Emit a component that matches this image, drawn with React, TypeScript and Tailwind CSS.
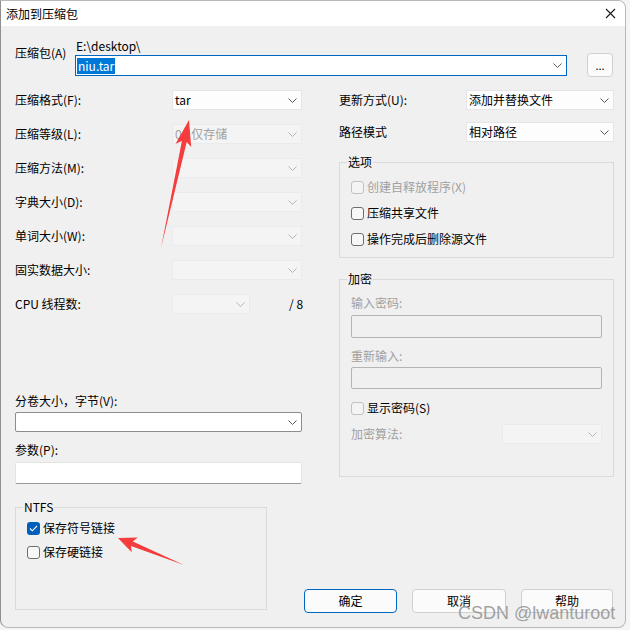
import React from "react";

function Chevron({ light }: { light?: boolean }) {
  return (
    <svg width="9" height="5" viewBox="0 0 9 5" className="shrink-0">
      <path d="M0.5 0.5 L4.5 4.5 L8.5 0.5" fill="none" stroke={light ? "#b5b5b5" : "#5a5a5a"} strokeWidth="1" />
    </svg>
  );
}

function Dropdown({ value, disabled, className }: { value?: string; disabled?: boolean; className: string }) {
  return (
    <div
      className={
        disabled
          ? `h-[20px] shrink-0 flex items-center justify-between pl-[2px] pr-[4px] bg-[#f4f4f4] border border-[#ebebeb] text-[#a0a0a0] ${className}`
          : `h-[20px] shrink-0 flex items-center justify-between pl-[2px] pr-[4px] bg-[#fdfdfd] border border-[#e6e6e6] text-black ${className}`
      }
    >
      <span className="leading-[16px] whitespace-nowrap">{value ?? ""}</span>
      <Chevron light={disabled} />
    </div>
  );
}

function CheckBox({ checked, disabled, label, labelGray }: { checked?: boolean; disabled?: boolean; label: string; labelGray?: boolean }) {
  return (
    <div className="h-[16px] flex items-center gap-[3px]">
      {checked ? (
        <div className="w-[13px] h-[13px] rounded-[3px] bg-[#005fb8] flex items-center justify-center">
          <svg width="9" height="7" viewBox="0 0 9 7">
            <path d="M1 3.5 L3.3 5.8 L8 1" fill="none" stroke="#ffffff" strokeWidth="1.1" />
          </svg>
        </div>
      ) : (
        <div
          className={
            disabled
              ? "w-[13px] h-[13px] rounded-[3px] border border-[#c2c2c2] bg-[#f4f4f4]"
              : "w-[13px] h-[13px] rounded-[3px] border border-[#6e6e6e] bg-[#f7f7f7]"
          }
        />
      )}
      <span className={labelGray ? "leading-[16px] text-[#a0a0a0]" : "leading-[16px] text-black"}>{label}</span>
    </div>
  );
}

function Row({ label, children }: { label: string; children: React.ReactNode }) {
  return (
    <div className="h-[20px] flex items-center">
      <span className="w-[157px] shrink-0 leading-[16px]">{label}</span>
      {children}
    </div>
  );
}

export default function App() {
  return (
    <div className="w-[630px] h-[630px] bg-[#f5f5f5] relative overflow-hidden font-['Noto_Sans_CJK_SC',sans-serif] text-[12px] leading-[16px] text-black">
      <div className="w-[626px] h-[628px] bg-[#f0f0f0] border border-[#b8b8b8] border-l-[#8f8f8f] rounded-tr-[8px] rounded-b-[8px] flex flex-col overflow-hidden">
        {/* Title bar */}
        <div className="h-[25px] bg-white flex items-center justify-between pl-[5px] pr-[9px] shrink-0">
          <span className="text-[12px] leading-[16px] mt-[1px]">添加到压缩包</span>
          <svg width="11" height="11" viewBox="0 0 11 11">
            <path d="M1 1 L10 10 M10 1 L1 10" stroke="#1a1a1a" strokeWidth="1.1" />
          </svg>
        </div>

        {/* Body */}
        <div className="flex flex-col pl-[14px]">
          {/* Archive row */}
          <div className="flex mt-[13px]">
            <span className="w-[60px] pt-[6px] leading-[16px]">压缩包(A)</span>
            <div className="flex flex-col w-[492px]">
              <span className="h-[14px] leading-[14px] pl-[1px]">E:\desktop\</span>
              <div className="mt-[2px] h-[21px] bg-white border border-[#0067c0] flex items-center justify-between pl-[1px] pr-[4px]">
                <span className="bg-[#0078d7] text-white leading-[16px] px-[1px]">niu.tar</span>
                <Chevron />
              </div>
            </div>
            <div className="ml-[20px] mt-[14px] w-[26px] h-[24px] bg-[#fbfbfb] border border-[#d0d0d0] rounded-[4px] flex items-center justify-center text-[11px] leading-[12px]">
              ...
            </div>
          </div>

          {/* Main */}
          <div className="flex mt-[13px]">
            {/* Left column */}
            <div className="w-[287px] flex flex-col">
              <div className="flex flex-col gap-[14px]">
                <Row label="压缩格式(F):">
                  <Dropdown value="tar" className="w-[130px]" />
                </Row>
                <Row label="压缩等级(L):">
                  <Dropdown value="0 - 仅存储" disabled className="w-[130px]" />
                </Row>
                <Row label="压缩方法(M):">
                  <Dropdown disabled className="w-[130px]" />
                </Row>
                <Row label="字典大小(D):">
                  <Dropdown disabled className="w-[130px]" />
                </Row>
                <Row label="单词大小(W):">
                  <Dropdown disabled className="w-[130px]" />
                </Row>
                <Row label="固实数据大小:">
                  <Dropdown disabled className="w-[130px]" />
                </Row>
                <Row label="CPU 线程数:">
                  <Dropdown disabled className="w-[78px]" />
                  <span className="ml-[39px] leading-[16px] whitespace-nowrap shrink-0">/ 8</span>
                </Row>
              </div>

              <span className="mt-[79px] leading-[16px]">分卷大小，字节(V):</span>
              <div className="mt-[3px] h-[20px] bg-white border border-[#8c8c8c] rounded-[2px] flex items-center justify-end pr-[4px]">
                <Chevron />
              </div>
              <span className="mt-[10px] leading-[16px]">参数(P):</span>
              <div className="mt-[4px] h-[22px] bg-white border border-[#e3e3e3] border-b-[#9a9a9a] rounded-[2px]" />

              {/* NTFS group */}
              <div className="mt-[23px] w-[252px] h-[103px] border border-[#dadada] relative flex flex-col pl-[11px] pt-[12px] gap-[8px]">
                <span className="absolute -top-[9px] left-[7px] px-[1px] bg-[#f0f0f0] leading-[16px]">NTFS</span>
                <CheckBox checked label="保存符号链接" />
                <CheckBox label="保存硬链接" />
              </div>
            </div>

            {/* Right column */}
            <div className="w-[310px] ml-[2px] flex flex-col">
              <div className="ml-[35px] w-[275px] flex flex-col">
                <div className="h-[20px] flex items-center justify-between">
                  <span className="leading-[16px]">更新方式(U):</span>
                  <Dropdown value="添加并替换文件" className="w-[148px]" />
                </div>
                <div className="mt-[12px] h-[20px] flex items-center justify-between">
                  <span className="leading-[16px]">路径模式</span>
                  <Dropdown value="相对路径" className="w-[148px]" />
                </div>

                {/* Options group */}
                <div className="mt-[20px] h-[96px] border border-[#dadada] relative flex flex-col pl-[11px] pt-[16px] gap-[10px]">
                  <span className="absolute -top-[9px] left-[7px] px-[1px] bg-[#f0f0f0] leading-[16px]">选项</span>
                  <CheckBox disabled labelGray label="创建自释放程序(X)" />
                  <CheckBox label="压缩共享文件" />
                  <CheckBox label="操作完成后删除源文件" />
                </div>

                {/* Encryption group */}
                <div className="mt-[21px] h-[198px] border border-[#dadada] relative flex flex-col px-[11px] pt-[15px]">
                  <span className="absolute -top-[9px] left-[7px] px-[1px] bg-[#f0f0f0] leading-[16px]">加密</span>
                  <span className="leading-[16px] text-[#a0a0a0]">输入密码:</span>
                  <div className="mt-[4px] h-[23px] border border-[#b4b4b4] rounded-[2px] bg-[#f0f0f0]" />
                  <span className="mt-[10px] leading-[16px] text-[#a0a0a0]">重新输入:</span>
                  <div className="mt-[3px] h-[22px] border border-[#b4b4b4] rounded-[2px] bg-[#f0f0f0]" />
                  <div className="mt-[11px]">
                    <CheckBox disabled label="显示密码(S)" />
                  </div>
                  <div className="mt-[8px] h-[20px] flex items-center justify-between">
                    <span className="leading-[16px] text-[#a0a0a0]">加密算法:</span>
                    <Dropdown disabled className="w-[100px]" />
                  </div>
                </div>
              </div>

              {/* Buttons */}
              <div className="mt-[112px] flex gap-[15px]">
                <div className="w-[93px] h-[24px] bg-[#fbfbfb] border border-[#0067c0] rounded-[4px] flex items-center justify-center leading-[16px]">确定</div>
                <div className="w-[94px] h-[24px] bg-[#fbfbfb] border border-[#d0d0d0] rounded-[4px] flex items-center justify-center leading-[16px]">取消</div>
                <div className="w-[92px] h-[24px] bg-[#fbfbfb] border border-[#d0d0d0] rounded-[4px] flex items-center justify-center leading-[16px]">帮助</div>
              </div>
            </div>
          </div>
        </div>
      </div>

      {/* Watermark */}
      <span className="absolute left-[458px] top-[602px] font-['Liberation_Sans',sans-serif] text-[18px] leading-[22px] text-[#8a8a8a]/80 whitespace-nowrap">
        CSDN @lwanturoot
      </span>

      {/* Red annotation arrows */}
      <svg className="absolute left-0 top-0 pointer-events-none" width="630" height="630" viewBox="0 0 630 630">
        <polygon points="189,120 191.2,147.1 186.7,142 161,248 181.9,141 175.6,143.7" fill="#f53d3d" />
        <polygon points="118,538 137.7,537.4 132.8,541.4 184,565 131,546 131.7,552.2" fill="#f53d3d" />
      </svg>
    </div>
  );
}
